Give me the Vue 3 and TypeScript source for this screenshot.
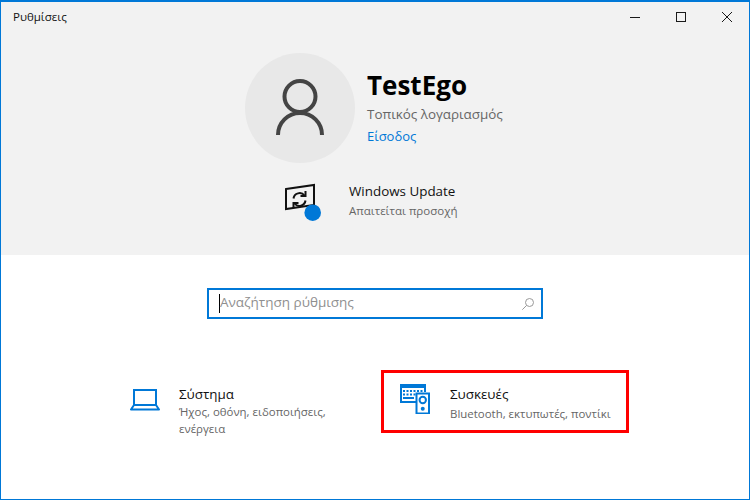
<script setup lang="ts">
interface Tile { id: string; title: string; lines: string[]; selected: boolean }
const tiles: Tile[] = [
  { id: 'system', title: 'Σύστημα', lines: ['Ήχος, οθόνη, ειδοποιήσεις,', 'ενέργεια'], selected: false },
  { id: 'devices', title: 'Συσκευές', lines: ['Bluetooth, εκτυπωτές, ποντίκι'], selected: true },
]
</script>

<template>
  <div class="window">
    <div class="top">
      <div class="titlebar">
        <span class="title">Ρυθμίσεις</span>
        <div class="controls">
          <svg width="10" height="10" viewBox="0 0 10 10"><path d="M0 5.500H10" stroke="#1a1a1a" fill="none" /></svg>
          <svg width="10" height="10" viewBox="0 0 10 10"><rect x="0.500" y="0.500" width="9" height="9" stroke="#1a1a1a" fill="none" /></svg>
          <svg width="10" height="10" viewBox="0 0 10 10"><path d="M0 0L10 10M10 0L0 10" stroke="#1a1a1a" fill="none" /></svg>
        </div>
      </div>
      <div class="profile">
        <div class="avatar">
          <svg width="58" height="58" viewBox="0 0 58 58">
            <circle cx="29" cy="17.500" r="15.500" fill="none" stroke="#444" stroke-width="4" />
            <path d="M7 56A22 22 0 0 1 51 56" fill="none" stroke="#444" stroke-width="4" />
          </svg>
        </div>
        <div class="account">
          <div class="name">TestEgo</div>
          <div class="kind">Τοπικός λογαριασμός</div>
          <div class="link">Είσοδος</div>
        </div>
      </div>
      <div class="update">
        <div class="update-icon">
          <svg width="42" height="42" viewBox="0 0 42 42">
            <path d="M2 10L30 6V26L2 30Z" fill="none" stroke="#111" stroke-width="2" />
            <path d="M9.500 19.500A6.200 6.200 0 0 1 20.500 16.500M21.500 21.500A6.200 6.200 0 0 1 10.500 24.500" fill="none" stroke="#111" stroke-width="2" />
            <path d="M16.500 17H21.500V12M14.500 24H9.500V29" fill="none" stroke="#111" stroke-width="2" />
            <circle cx="28.700" cy="33.700" r="8.300" fill="#0078d7" />
          </svg>
        </div>
        <div class="update-text">
          <div class="update-title">Windows Update</div>
          <div class="update-sub">Απαιτείται προσοχή</div>
        </div>
      </div>
    </div>

    <div class="bottom">
      <div class="search">
        <span class="caret"></span>
        <span class="placeholder">Αναζήτηση ρύθμισης</span>
        <svg class="search-icon" width="12" height="12" viewBox="0 0 12 12">
          <circle cx="7.500" cy="4.500" r="4" fill="none" stroke="#999" />
          <path d="M4.600 7.400L0.300 11.700" stroke="#999" fill="none" />
        </svg>
      </div>
      <div class="tiles">
        <div v-for="t in tiles" :key="t.id" class="tile" :class="{ selected: t.selected }">
          <svg v-if="t.id === 'system'" class="tile-icon" width="30" height="22" viewBox="0 0 30 22">
            <path d="M4 1H26V16H4Z" fill="none" stroke="#0078d7" stroke-width="2" />
            <path d="M4 16L1 20.500H29L26 16" fill="none" stroke="#0078d7" stroke-width="2" stroke-linejoin="round" />
          </svg>
          <svg v-else class="tile-icon" width="30" height="30" viewBox="0 0 30 30">
            <path d="M16 18H1V1H25V8" fill="none" stroke="#0078d7" stroke-width="2" />
            <path d="M0 3H26" stroke="#0078d7" stroke-width="2" fill="none" />
            <path d="M3 7h2M6.500 7h2M10 7h2M13.500 7h2M17 7h2M20.500 7h2M3 10.500h2M6.500 10.500h2M10 10.500h2M13.500 10.500h2M3 14h11" stroke="#0078d7" stroke-width="2" fill="none" />
            <rect x="16.500" y="9.500" width="12.500" height="20" fill="#fff" stroke="#0078d7" stroke-width="2" />
            <circle cx="22.750" cy="16" r="3.200" fill="none" stroke="#0078d7" stroke-width="2" />
            <circle cx="22.750" cy="24.800" r="2" fill="#0078d7" />
          </svg>
          <div class="tile-text">
            <div class="tile-title">{{ t.title }}</div>
            <div v-for="l in t.lines" :key="l" class="tile-sub">{{ l }}</div>
          </div>
        </div>
      </div>
    </div>
  </div>
</template>

<style>
html, body { margin: 0; padding: 0; background: #fff; }
</style>

<style scoped>
.window {
  box-sizing: border-box;
  width: 750px;
  height: 500px;
  border: 1px solid #0078d7;
  border-top-width: 2px;
  display: flex;
  flex-direction: column;
  font-family: "Open Sans", "Noto Sans", sans-serif;
  background: #fff;
  overflow: hidden;
}
.top {
  height: 253px;
  background: #f2f2f2;
  flex: none;
}
.titlebar {
  height: 29px;
  display: flex;
  align-items: center;
  justify-content: space-between;
  padding: 0 17px 0 12px;
}
.title { font-size: 11.500px; color: #111; }
.controls { display: flex; gap: 36px; align-items: center; }
.controls svg { display: block; }
.profile {
  display: flex;
  align-items: center;
  margin: 22px 0 0 244px;
  gap: 12px;
}
.avatar {
  width: 110px;
  height: 110px;
  border-radius: 50%;
  background: #e8e8e8;
  display: flex;
  align-items: center;
  justify-content: center;
}
.account { padding-bottom: 3px; }
.name { font-size: 26px; font-weight: 700; color: #000; line-height: 34px; }
.kind { font-size: 13.400px; color: #666; line-height: 20px; margin-top: 2px; }
.link { font-size: 13px; color: #0078d7; line-height: 20px; margin-top: 2px; }
.update {
  display: flex;
  align-items: center;
  margin: 16px 0 0 283px;
  gap: 23px;
}
.update-icon { width: 42px; height: 42px; }
.update-icon svg { display: block; }
.update-title { font-size: 13.400px; color: #111; line-height: 20px; }
.update-sub { font-size: 11.500px; color: #666; line-height: 18px; margin-top: 1px; }
.bottom { flex: 1; display: flex; flex-direction: column; }
.search {
  box-sizing: border-box;
  width: 336px;
  height: 31px;
  margin: 33px 0 0 206px;
  border: 2px solid #0078d7;
  display: flex;
  align-items: center;
  padding: 0 7px 0 10px;
}
.caret { width: 1px; height: 19px; background: #000; flex: none; }
.placeholder { font-size: 13.500px; color: #8f8f8f; flex: 1; line-height: 19px; padding-bottom: 3px; }
.search-icon { flex: none; }
.tiles {
  display: flex;
  margin: 51px 0 0 118px;
}
.tile {
  box-sizing: border-box;
  width: 248px;
  height: 63px;
  display: flex;
  align-items: flex-start;
}
.tile:first-child { width: 262px; padding: 15px 0 0 11px; }
.tile.selected { border: 3px solid #f00; padding: 12px 0 0 16px; }
.tile-icon { flex: none; display: block; }
.tile:first-child .tile-icon { margin: 4px 19px 0 0; }
.tile.selected .tile-icon { margin: -1px 20px 0 0; }
.tile-title { font-size: 13.400px; color: #111; line-height: 18px; }
.tile-sub { font-size: 11.450px; color: #666; line-height: 17px; }
.tile:first-child .tile-title { margin-top: 0; }
.tile.selected .tile-title { margin-bottom: 2px; }
.tile.selected .tile-sub { line-height: 18px; }
</style>
